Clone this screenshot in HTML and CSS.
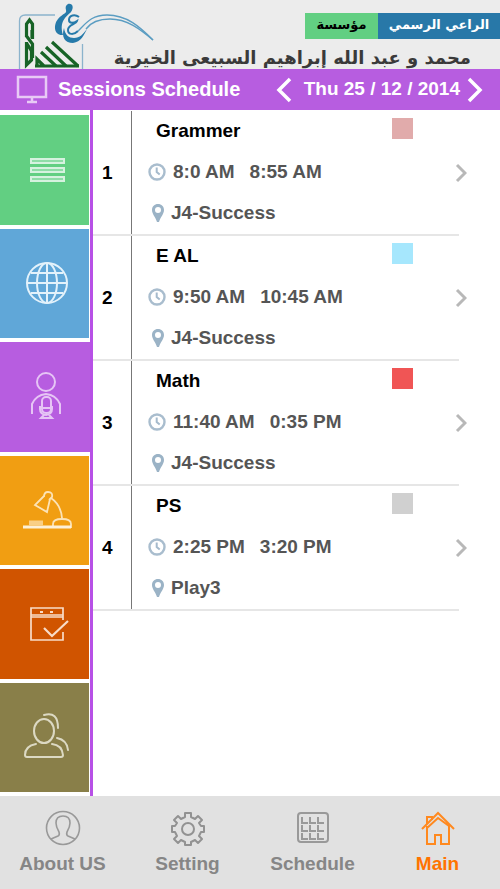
FILE: index.html
```html
<!DOCTYPE html>
<html lang="en">
<head>
    <meta charset="UTF-8">
    <meta name="viewport" content="width=device-width, initial-scale=1.0">
    <title>Sessions Schedule</title>
    <link rel="stylesheet" href="styles.css">
</head>
<body>
    <svg class="symbols" width="0" height="0" aria-hidden="true">
        <symbol id="clock" viewBox="0 0 18 18">
            <circle cx="9" cy="9" r="7.500" fill="none" stroke="#a9bdce" stroke-width="2.400"/>
            <path d="M8.700 4.500V9l3 2.500" fill="none" stroke="#a5bacc" stroke-width="2"/>
        </symbol>
        <symbol id="pin" viewBox="0 0 12 18">
            <path fill="#9bb3c6" fill-rule="evenodd" d="M6 0C2.500 0 0 2.500 0 6c0 4 3.500 7 5 12h2c1.500-5 5-8 5-12 0-3.500-2.500-6-6-6zM6 3a3 3 0 1 1 0 6a3 3 0 1 1 0-6z"/>
        </symbol>
        <symbol id="arrow" viewBox="0 0 12 20">
            <path d="M2 2l8 8-8 8" fill="none" stroke="currentColor" stroke-width="3"/>
        </symbol>
    </svg>

    <header class="header">
        <svg class="logo" width="80" height="69" viewBox="0 0 80 69" aria-hidden="true">
            <path d="M1.500 69V21q0-6 6-6H37M64.500 44v25" fill="none" stroke="#8bb3cc" stroke-width="1.300"/>
            <g fill="none" stroke="#176326" stroke-width="3.200">
                <path d="M8.500 37V24l3-4 3 4v15M8.500 36l6 8v14M14 30v8M8.500 42v23l5-5v-9l-5-8"/>
                <path d="M17 66h44M19 66v-7l7 7"/>
                <path d="M23 52l15 14M28 47l20 19M34 42l26 24"/>
            </g>
            <path d="M50 4c5-1 6 4 3 8-5 5-12 9-8 23-9 1-10-10-5-16 5-6 9-5 8-9-1-3 0-5 2-6z" fill="#267aaa"/>
            <path d="M46 28c-3 9 1 15 9 15 8-1 11-8 14-14-4 5-7 9-13 9-5 0-9-3-10-10z" fill="#267aaa"/>
            <path d="M61 17c-4-3-10-2-10 3 0 4 5 3 8 1-1 4-9 3-9 9 0 5 6 5 10 1" fill="none" stroke="#267aaa" stroke-width="2"/>
            <g fill="none" stroke="#5b9dc2" stroke-width="1.400">
                <path d="M60 31c9-9 14-16 29-16 20 0 33 12 46 25"/>
                <path d="M68 29c5-7 13-10 24-10 17 0 30 10 43 21"/>
            </g>
        </svg>
        <div class="sponsor" lang="ar" dir="rtl">
            <div class="sponsor-tags">
                <span class="tag tag-blue">الراعي الرسمي</span>
                <span class="tag tag-green">مؤسسة</span>
            </div>
            <p class="sponsor-name">محمد و عبد الله إبراهيم السبيعى الخيرية</p>
        </div>
    </header>

    <div class="title-bar">
        <svg class="title-icon" width="32" height="30" viewBox="0 0 32 30" aria-hidden="true">
            <path d="M2 2h28v20H2zM16 22v5M11 27h10" fill="none" stroke="#e8caf5" stroke-width="2.500"/>
        </svg>
        <h1>Sessions Schedule</h1>
        <div class="date-nav">
            <button aria-label="Previous day">
                <svg width="16" height="26" viewBox="0 0 16 26"><path d="M14 2L3 13l11 11" fill="none" stroke="currentColor" stroke-width="3.500"/></svg>
            </button>
            <span class="date">Thu 25 / 12 / 2014</span>
            <button aria-label="Next day">
                <svg width="16" height="26" viewBox="0 0 16 26"><path d="M2 2l11 11L2 24" fill="none" stroke="currentColor" stroke-width="3.500"/></svg>
            </button>
        </div>
    </div>

    <div class="content">
        <nav class="sidebar">
            <a class="tile green" href="#" aria-label="List">
                <svg width="54" height="54" viewBox="0 0 54 54">
                    <path d="M11 16h33v4H11zM11 25h33v4H11zM11 34h33v4H11z" fill="#8fdda7" stroke="#d6f2df" stroke-width="2"/>
                </svg>
            </a>
            <a class="tile blue" href="#" aria-label="Web">
                <svg width="54" height="54" viewBox="0 0 54 54" fill="none" stroke="#e3f2fb" stroke-width="2">
                    <circle cx="27" cy="27" r="20"/>
                    <ellipse cx="27" cy="27" rx="10" ry="20"/>
                    <path d="M27 7v40M7 27h40M11 17h32M11 37h32"/>
                </svg>
            </a>
            <a class="tile purple" href="#" aria-label="Sessions">
                <svg width="54" height="54" viewBox="0 0 54 54" fill="none" stroke="#e6c5f5" stroke-width="2">
                    <circle cx="26" cy="12" r="9"/>
                    <path d="M12 44V34q4-9 14-10 10 1 14 10v10"/>
                    <rect x="22" y="27" width="9" height="16" rx="4"/>
                    <path d="M20 36v3q0 5 6 6 6-1 6-6v-3M20 38h12M24 45l-3 3h11l-3-3"/>
                </svg>
            </a>
            <a class="tile orange" href="#" aria-label="Homework">
                <svg width="54" height="54" viewBox="0 0 54 54" fill="none" stroke="#fce3b6" stroke-width="1.800">
                    <path d="M24 13l-9 9 12 7 3-13M24 14q0-5 4-5 5 0 4 5l-3 3M31 15q10 7 11 20M33 41q0-5 9-5t9 5v3H33z"/>
                    <path d="M3 44h48" stroke="#fdf0d7" stroke-width="3"/>
                    <path d="M9 40h14" stroke="#f9cf86" stroke-width="5"/>
                </svg>
            </a>
            <a class="tile red" href="#" aria-label="Tasks">
                <svg width="54" height="54" viewBox="0 0 54 54" fill="none" stroke="#f8dcc8" stroke-width="1.700">
                    <path d="M43 23V11H11v32h32v-8M11 18h32M11 20h32"/>
                    <path d="M20 15h3M30 15h3" stroke-width="2"/>
                    <path d="M24 31l8 8 16-15" stroke-width="2.200"/>
                </svg>
            </a>
            <a class="tile olive" href="#" aria-label="Friends">
                <svg width="54" height="54" viewBox="0 -2 54 54" fill="none" stroke="#dcd9c3" stroke-width="2" stroke-linecap="round">
                    <ellipse cx="24" cy="19" rx="10" ry="12"/>
                    <path d="M16 32Q5 34 5 43q0 2 2 2h34q2 0 2-2-1-10-11-11M24 3q14-4 14 13M37 26q10 2 11 12"/>
                </svg>
            </a>
        </nav>

        <main>
            <ol class="sessions">
                <li class="session">
                    <span class="number">1</span>
                    <a class="details" href="#">
                        <span class="subject">Grammer</span>
                        <span class="line"><svg class="clock"><use href="#clock"/></svg><span>8:0 AM</span><span class="end">8:55 AM</span></span>
                        <span class="line"><svg class="pin"><use href="#pin"/></svg><span>J4-Success</span></span>
                    </a>
                    <span class="swatch rose"></span>
                    <svg class="arrow"><use href="#arrow"/></svg>
                </li>
                <li class="session">
                    <span class="number">2</span>
                    <a class="details" href="#">
                        <span class="subject">E AL</span>
                        <span class="line"><svg class="clock"><use href="#clock"/></svg><span>9:50 AM</span><span class="end">10:45 AM</span></span>
                        <span class="line"><svg class="pin"><use href="#pin"/></svg><span>J4-Success</span></span>
                    </a>
                    <span class="swatch sky"></span>
                    <svg class="arrow"><use href="#arrow"/></svg>
                </li>
                <li class="session">
                    <span class="number">3</span>
                    <a class="details" href="#">
                        <span class="subject">Math</span>
                        <span class="line"><svg class="clock"><use href="#clock"/></svg><span>11:40 AM</span><span class="end">0:35 PM</span></span>
                        <span class="line"><svg class="pin"><use href="#pin"/></svg><span>J4-Success</span></span>
                    </a>
                    <span class="swatch coral"></span>
                    <svg class="arrow"><use href="#arrow"/></svg>
                </li>
                <li class="session">
                    <span class="number">4</span>
                    <a class="details" href="#">
                        <span class="subject">PS</span>
                        <span class="line"><svg class="clock"><use href="#clock"/></svg><span>2:25 PM</span><span class="end">3:20 PM</span></span>
                        <span class="line"><svg class="pin"><use href="#pin"/></svg><span>Play3</span></span>
                    </a>
                    <span class="swatch silver"></span>
                    <svg class="arrow"><use href="#arrow"/></svg>
                </li>
            </ol>
        </main>
    </div>

    <nav class="footer">
        <a href="#">
            <svg width="36" height="36" viewBox="0 0 36 36" fill="none" stroke="#999" stroke-width="1.600">
                <circle cx="18" cy="18" r="16.500"/>
                <path d="M6 29l7-3q2-1 1-4-3-5-3-9 0-7 7-7t7 7q0 4-3 9-1 3 1 4l7 3"/>
            </svg>
            About US
        </a>
        <a href="#">
            <svg width="36" height="36" viewBox="0 0 36 36" fill="none" stroke="#929292" stroke-width="2" stroke-linejoin="round">
                <path d="M15 3h6v4l4 2 3-3 4 4-3 3 2 3h3v6h-3l-2 4 3 3-4 4-3-3-4 2v3h-6v-3l-4-2-3 3-4-4 3-3-2-4H2v-6h3l2-3-3-3 4-4 3 3 4-2z"/>
                <circle cx="18" cy="19" r="6"/>
            </svg>
            Setting
        </a>
        <a href="#">
            <svg width="36" height="36" viewBox="0 0 36 36" fill="none" stroke="#999" stroke-width="2">
                <rect x="3" y="3" width="30" height="29" rx="3"/>
                <path d="M7 7v6h6M15 7v6h6M23 7v6h6M7 15v6h6M15 15v6h6M23 15v6h6M7 23v6h6M15 23v6h6M23 23v6h6"/>
            </svg>
            Schedule
        </a>
        <a class="active" href="#">
            <svg width="36" height="36" viewBox="0 0 36 36" fill="none" stroke="#ff891f" stroke-width="2">
                <path d="M2 19L18 3l16 16M7 16v18h8V25h6v9h8V16L18 8 7 18M7 14V7h5v3"/>
            </svg>
            Main
        </a>
    </nav>
</body>
</html>
```
FILE: styles.css
```css
* {
    box-sizing: border-box;
}
body {
    font-family: "Liberation Sans", Arial, sans-serif;
    font-size: 19px;
    font-weight: bold;
    line-height: 22px;
    margin: 0;
    min-height: 100vh;
    display: flex;
    flex-direction: column;
    background-color: #ffffff;
}
a {
    color: inherit;
    text-decoration: none;
}
.symbols {
    position: absolute;
}

/* Sponsor banner */
.header {
    display: flex;
    justify-content: space-between;
    height: 69px;
    padding-left: 18px;
    background-color: #ececec;
}
.logo {
    flex: none;
    overflow: visible; /* the tail of the logo runs over the banner */
}
.sponsor {
    padding-top: 13px;
    font-family: "DejaVu Sans", sans-serif;
}
.sponsor-tags {
    display: flex;
}
.tag {
    height: 26px;
    font-size: 13px;
    line-height: 24px;
    text-align: center;
}
.tag-blue {
    width: 122px;
    background-color: #2878a8;
    color: white;
}
.tag-green {
    width: 73px;
    background-color: #62cf82;
    color: black;
}
.sponsor-name {
    margin: 7px 29px 0 0;
    font-size: 18px;
    line-height: 24px;
    color: #3a3a3a;
    white-space: nowrap;
}

/* Title */
.title-bar {
    display: flex;
    align-items: center;
    height: 41px;
    padding: 0 17px 0 16px;
    background-color: #b75de0;
    color: white;
}
.title-bar h1 {
    margin: 0 0 0 10px;
    padding-bottom: 2px;
    font-size: 20px;
    line-height: 22px;
}
.date-nav {
    display: flex;
    align-items: center;
    gap: 12px;
    margin-left: auto;
}
.date {
    padding-bottom: 2px;
}
.date-nav button {
    display: flex;
    padding: 0;
    border: none;
    background: none;
    color: white;
    cursor: pointer;
}
.date-nav button:last-child {
    margin-left: -5px;
}

/* Sidebar */
.content {
    flex: 1;
    display: flex;
}
.sidebar {
    width: 93px;
    display: flex;
    flex-direction: column;
    gap: 4px;
    padding: 5px 1px 4px 0;
    border-right: 3px solid #b750e6;
}
.tile {
    flex: 1;
    display: flex;
    align-items: center;
    justify-content: center;
    padding-left: 4px;
}
.green {
    background-color: #62cf82;
}
.blue {
    background-color: #60a7d8;
}
.purple {
    margin-right: -1px;
    background-color: #b75de0;
}
.orange {
    background-color: #f19e12;
}
.red {
    background-color: #d05400;
}
.olive {
    background-color: #897f49;
}

/* Sessions */
main {
    flex: 1;
}
.sessions {
    margin: 0;
    padding: 1px 41px 0 0;
    list-style: none;
}
.session {
    display: grid;
    grid-template-columns: 38px 1fr 21px 46px;
    height: 125px;
    border-bottom: 2px solid #e6e6e6;
}
.number {
    align-self: center;
    padding-left: 9px;
}
.details {
    display: flex;
    flex-direction: column;
    gap: 19px;
    padding: 9px 0 0 16px;
    border-left: 1px solid #777777;
    color: #555555;
}
.subject {
    padding-left: 8px;
    color: black;
}
.line {
    display: flex;
    align-items: center;
    gap: 7px;
}
.end {
    margin-left: 8px;
}
.clock {
    width: 18px;
    height: 18px;
}
.pin {
    width: 12px;
    height: 18px;
    margin-left: 4px;
}
.swatch {
    width: 21px;
    height: 21px;
    margin-top: 7px;
}
.rose {
    background-color: #e1abab;
}
.sky {
    background-color: #a6e7fd;
}
.coral {
    background-color: #f05555;
}
.silver {
    background-color: #d0d0d0;
}
.arrow {
    align-self: center;
    justify-self: end;
    width: 12px;
    height: 20px;
    margin-right: -8px;
    color: #b8b8b8;
}

/* Bottom menu */
.footer {
    display: flex;
    height: 93px;
    padding-top: 14px;
    background-color: #e1e1e1;
    color: #868686;
}
.footer a {
    flex: 1;
    display: flex;
    flex-direction: column;
    align-items: center;
    gap: 7px;
}
.footer .active {
    color: #ff7300;
}
```
